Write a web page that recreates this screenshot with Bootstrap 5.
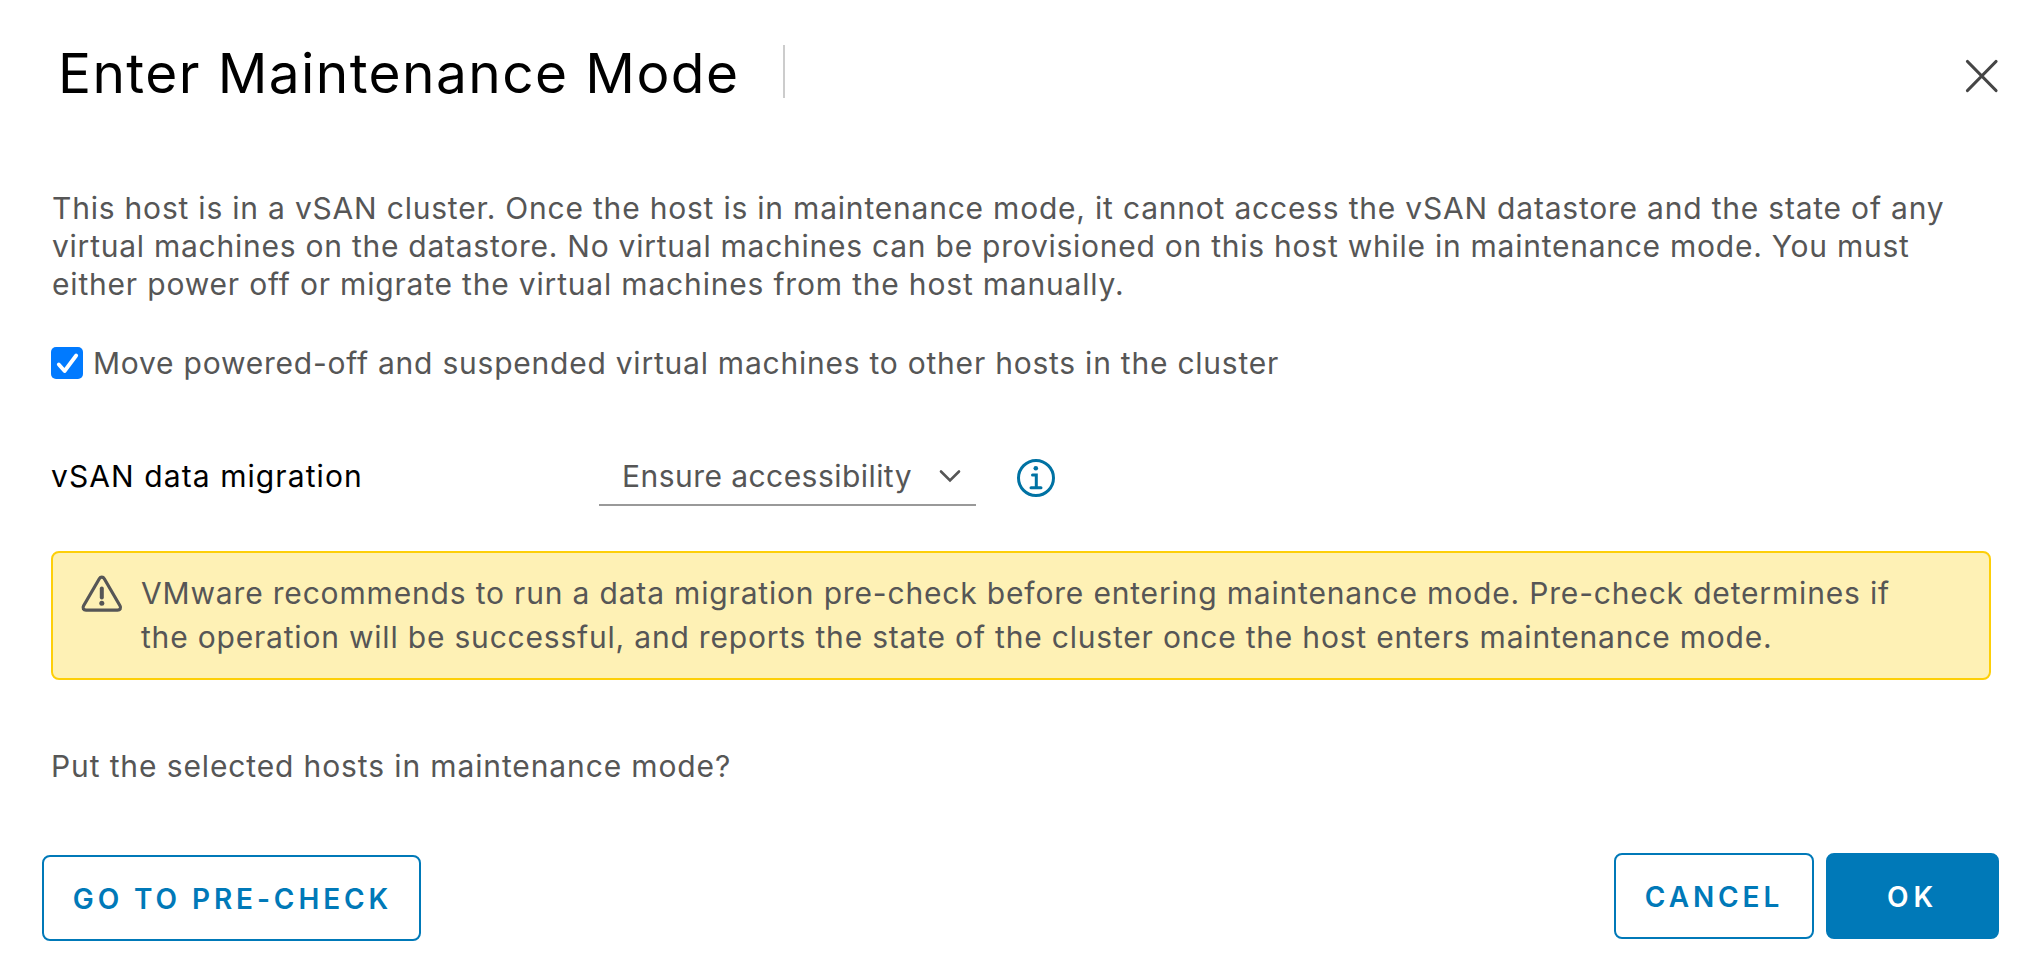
<!DOCTYPE html>
<html lang="en">
<head>
<meta charset="utf-8">
<meta name="viewport" content="width=device-width, initial-scale=1">
<title>Enter Maintenance Mode</title>
<link href="https://cdn.jsdelivr.net/npm/bootstrap@5.3.0/dist/css/bootstrap.min.css" rel="stylesheet">
<style>
  body { font-family: Inter, "Open Sans", sans-serif; font-size: 30px; line-height: 38px; color: #565656; background: #fff; }
  .dialog { width: 2037px; height: 977px; overflow: hidden; }
  .dialog-head { height: 148px; padding: 41px 36px 0 58px; }
  .dialog-title { width: 725px; white-space: nowrap; font-size: 55px; line-height: 64px; font-weight: 400; letter-spacing: 1.41px; color: #000; }
  .title-rule { width: 2px; height: 53px; margin-top: 4px; background: #ccc; }
  .close-btn { width: 40px; height: 40px; margin-top: 15px; }
  .dialog-main { padding: 41px 46px 0 51px; }
  .ln { display: block; white-space: nowrap; }
  .intro { height: 114px; padding-left: 1px; }
  .intro .ln:nth-child(1) { letter-spacing: .79px; }
  .intro .ln:nth-child(2) { letter-spacing: .749px; }
  .intro .ln:nth-child(3) { letter-spacing: .815px; }
  .move-row { margin-top: 41px; height: 38px; gap: 10px; letter-spacing: .767px; }
  .move-row .form-check-input { width: 32px; height: 32px; border-radius: 5px; border: 0; background-size: 32px 32px; }
  .move-row .form-check-input:checked { background-color: #007aff;
    background-image: url("data:image/svg+xml,%3csvg xmlns='http://www.w3.org/2000/svg' viewBox='0 0 32 32'%3e%3cpath fill='none' stroke='%23fff' stroke-width='3.8' stroke-linecap='round' stroke-linejoin='round' d='M7.800 17.500l5.800 6.500L25.200 8.500'/%3e%3c/svg%3e"); }
  .migrate-row { margin-top: 66px; height: 58px; }
  .migrate-label { width: 548px; padding-bottom: 2px; color: #000; letter-spacing: 1.083px; }
  .policy { width: 377px; height: 58px; padding: 0 14px 0 23px; border-bottom: 2px solid #999; letter-spacing: .45px; }
  .info-icon { margin-left: 40px; margin-top: 2px; }
  .notice { height: 129px; margin: 45px 0 0; padding: 18px 20px 0 27px; border: 2px solid #fdcf08; border-radius: 8px; background: #fef1b5; color: #565656; line-height: 44px; }
  .notice svg { margin: 3px 15px 0 0; }
  .notice .ln:nth-child(1) { letter-spacing: .827px; }
  .notice .ln:nth-child(2) { letter-spacing: .803px; }
  .question { margin-top: 67px; letter-spacing: .879px; }
  .dialog-foot { padding: 0 38px 0 42px; margin-top: 68px; }
  .act { --bs-btn-color: #0079b8; --bs-btn-border-color: #0079b8; height: 86px; border-width: 2px; border-radius: 8px; padding: 1px 0 0; font-size: 28px; font-weight: 600; line-height: 82px; letter-spacing: 3.9px; }
  .act-check { width: 379px; margin-top: 2px; padding-left: 2px; }
  .act-cancel { width: 200px; }
  .act-ok { width: 173px; margin-left: 12px; --bs-btn-color: #fff; --bs-btn-bg: #0079b8; letter-spacing: 5px; }
</style>
</head>
<body>
<div class="dialog">
  <header class="dialog-head d-flex align-items-start">
    <h1 class="dialog-title m-0">Enter Maintenance Mode</h1>
    <div class="title-rule"></div>
    <button type="button" class="close-btn btn p-0 border-0 ms-auto d-flex" aria-label="Close">
      <svg width="40" height="40" viewBox="0 0 40 40" fill="none" stroke="#454545" stroke-width="3.200" stroke-linecap="round"><path d="M6.500 5.500 35 34.500M35 5.500 6.500 34.500"/></svg>
    </button>
  </header>
  <main class="dialog-main">
    <p class="intro m-0"><span class="ln">This host is in a vSAN cluster. Once the host is in maintenance mode, it cannot access the vSAN datastore and the state of any</span><span class="ln">virtual machines on the datastore. No virtual machines can be provisioned on this host while in maintenance mode. You must</span><span class="ln">either power off or migrate the virtual machines from the host manually.</span></p>
    <div class="move-row d-flex align-items-center">
      <input class="form-check-input m-0 flex-shrink-0" type="checkbox" id="move" checked>
      <label for="move" class="text-nowrap">Move powered-off and suspended virtual machines to other hosts in the cluster</label>
    </div>
    <div class="migrate-row d-flex align-items-center">
      <span class="migrate-label">vSAN data migration</span>
      <div class="policy d-flex align-items-center justify-content-between" role="button">
        <span>Ensure accessibility</span>
        <svg width="24" height="16" viewBox="0 0 24 16" fill="none" stroke="#565656" stroke-width="2.600" stroke-linecap="round" stroke-linejoin="miter"><path d="M3 3.500 12 12.500 21 3.500"/></svg>
      </div>
      <svg class="info-icon" width="40" height="40" viewBox="0 0 40 40" fill="none" stroke="#0072a3" stroke-width="3" stroke-linecap="round"><circle cx="20" cy="20" r="17.500"/><circle cx="19.800" cy="10.300" r="2.300" fill="#0072a3" stroke="none"/><path d="M16.500 17H20.300V29.500M15 29.700H25"/></svg>
    </div>
    <div class="notice alert d-flex align-items-start" role="alert">
      <svg class="flex-shrink-0" width="46" height="40" viewBox="0 0 46 40" fill="none" stroke="#565656"><path stroke-width="3.200" stroke-linejoin="round" d="M19.300 4.700 3.600 31.800C2.300 34.200 3.500 36.100 6 36.100H37.600C40.100 36.100 41.300 34.200 40 31.800L24.300 4.700C23.100 2.700 20.500 2.700 19.300 4.700Z"/><path stroke-width="4" stroke-linecap="round" d="M21.800 14.500V23.500"/><circle cx="21.800" cy="29.200" r="2.500" fill="#565656" stroke="none"/></svg>
      <div><span class="ln">VMware recommends to run a data migration pre-check before entering maintenance mode. Pre-check determines if</span><span class="ln">the operation will be successful, and reports the state of the cluster once the host enters maintenance mode.</span></div>
    </div>
    <p class="question mb-0">Put the selected hosts in maintenance mode?</p>
  </main>
  <footer class="dialog-foot d-flex align-items-start">
    <button type="button" class="btn act act-check">GO TO PRE-CHECK</button>
    <button type="button" class="btn act act-cancel ms-auto">CANCEL</button>
    <button type="button" class="btn act act-ok">OK</button>
  </footer>
</div>
<script src="https://cdn.jsdelivr.net/npm/bootstrap@5.3.0/dist/js/bootstrap.bundle.min.js"></script>
</body>
</html>
